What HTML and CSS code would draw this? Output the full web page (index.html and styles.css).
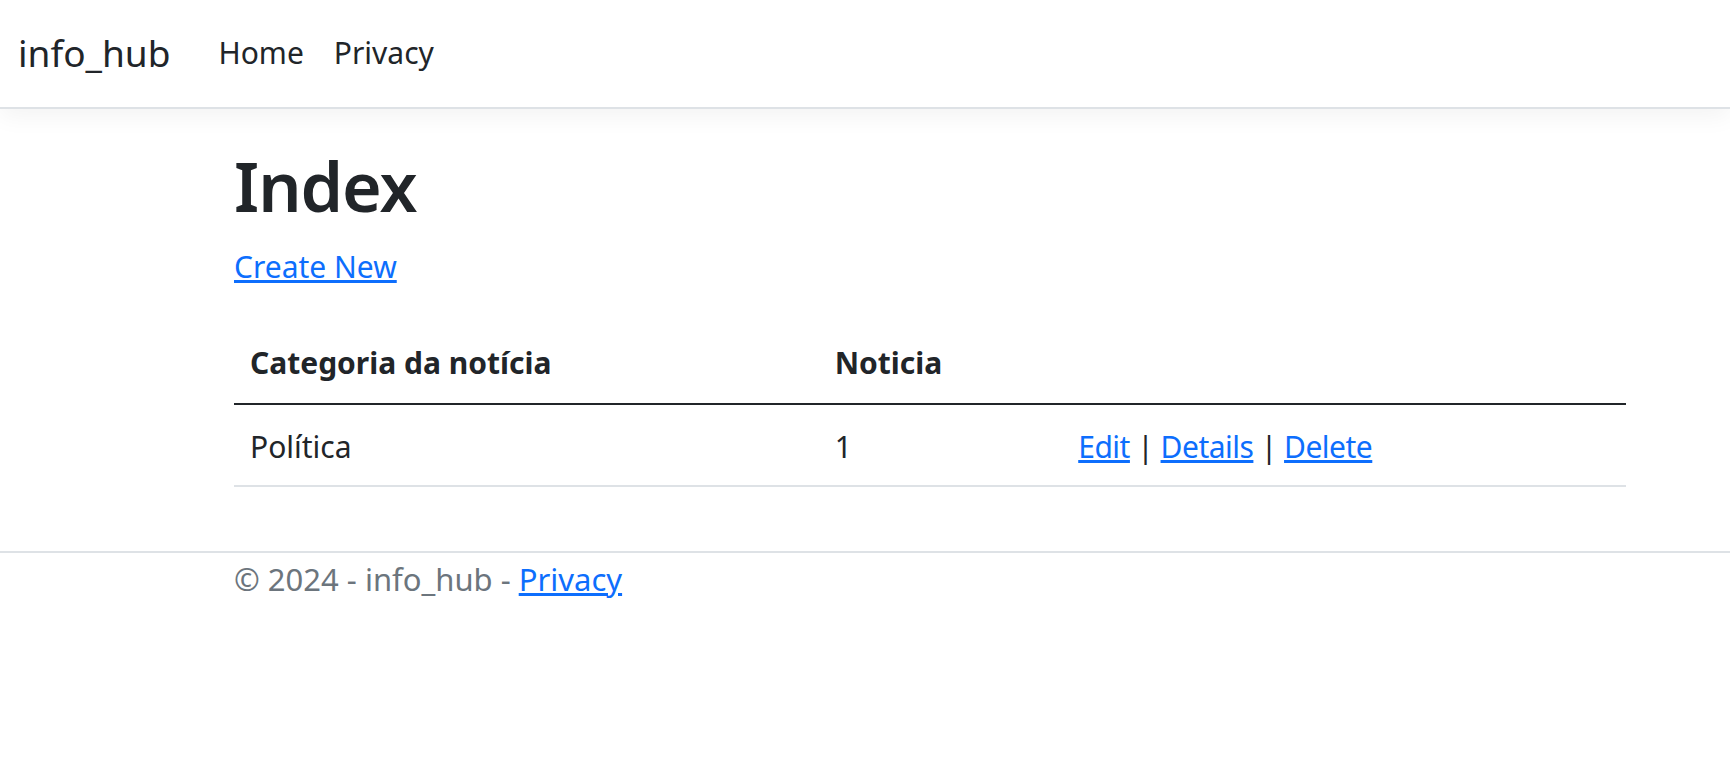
FILE: index.html
```html
<!DOCTYPE html>
<html lang="pt">
<head>
<meta charset="utf-8">
<title>Index - info_hub</title>
<link rel="stylesheet" href="styles.css">
</head>
<body>
<header>
  <nav class="navbar">
    <div class="nav-inner">
      <a class="brand" href="#">info_hub</a>
      <ul class="nav">
        <li><a class="nav-link" href="#">Home</a></li>
        <li><a class="nav-link" href="#">Privacy</a></li>
      </ul>
    </div>
  </nav>
</header>
<div class="container">
  <main class="main">
    <h1 class="title">Index</h1>
    <p class="create"><a href="#">Create New</a></p>
    <table class="table">
      <thead>
        <tr>
          <th class="col-cat">Categoria da notícia</th>
          <th class="col-num">Noticia</th>
          <th class="col-act"></th>
        </tr>
      </thead>
      <tbody>
        <tr>
          <td>Política</td>
          <td>1</td>
          <td class="actions"><a href="#">Edit</a> | <a href="#">Details</a> | <a href="#">Delete</a></td>
        </tr>
      </tbody>
    </table>
  </main>
</div>
<footer class="footer">
  <div class="container">&copy; 2024 - info_hub - <a href="#">Privacy</a></div>
</footer>
</body>
</html>
```
FILE: styles.css
```css
html, body {
  margin: 0;
  padding: 0;
  background: #fff;
}
body {
  font-family: "Noto Sans", "Open Sans", sans-serif;
  font-size: 30px;
  line-height: 48px;
  color: #212529;
}
a {
  color: #0d6efd;
  text-decoration: underline;
}
.navbar {
  padding: 15px 0 16px;
  border-bottom: 2px solid #dee2e6;
  box-shadow: 0 7px 23px rgba(0, 0, 0, 0.05);
}
.nav-inner {
  display: flex;
  align-items: center;
  padding-left: 18px;
}
.brand {
  font-size: 37px;
  line-height: 58px;
  padding: 9px 0;
  margin-right: 33px;
  color: #212529;
  text-decoration: none;
}
.nav {
  display: flex;
  list-style: none;
  margin: 0;
  padding: 0;
}
.nav-link {
  display: block;
  line-height: 46px;
  padding: 15px 15px;
  color: #212529;
  text-decoration: none;
}
.container {
  width: 1392px;
  margin-left: 234px;
}
.main {
  margin-top: 36px;
  padding-bottom: 32px;
}
.title {
  font-size: 68px;
  font-weight: 600;
  letter-spacing: -1px;
  line-height: 1.2;
  margin: 0 0 16px;
}
.create {
  margin: 0 0 32px;
}
.table {
  width: 100%;
  border-collapse: collapse;
  margin-bottom: 32px;
}
.table th,
.table td {
  padding: 16px;
  text-align: left;
  vertical-align: top;
}
.table td {
  padding-top: 18px;
  padding-bottom: 14px;
}
.table th {
  font-weight: 700;
}
.col-cat {
  width: 42%;
}
.col-num {
  width: 17.5%;
}
.actions {
  letter-spacing: -0.5px;
}
.table thead tr {
  border-bottom: 2px solid #212529;
}
.table tbody tr {
  border-bottom: 2px solid #dee2e6;
}
.footer {
  border-top: 2px solid #dee2e6;
  line-height: 52px;
  font-size: 31px;
  color: #6c757d;
  white-space: nowrap;
}
```
